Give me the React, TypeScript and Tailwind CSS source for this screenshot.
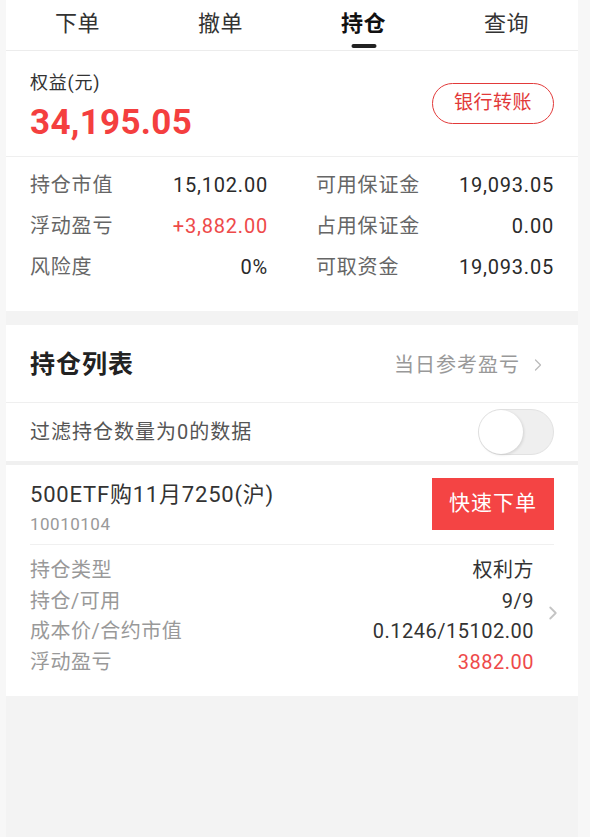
import { ChevronRight } from "lucide-react";

const tabs = ["下单", "撤单", "持仓", "查询"];

const stats = [
    { l1: "持仓市值", v1: "15,102.00", l2: "可用保证金", v2: "19,093.05", red: false },
    { l1: "浮动盈亏", v1: "+3,882.00", l2: "占用保证金", v2: "0.00", red: true },
    { l1: "风险度", v1: "0%", l2: "可取资金", v2: "19,093.05", red: false },
];

const details = [
    { label: "持仓类型", value: "权利方" },
    { label: "持仓/可用", value: "9/9" },
    { label: "成本价/合约市值", value: "0.1246/15102.00" },
    { label: "浮动盈亏", value: "3882.00", red: true },
];

export default function App() {
    return (
        <div className="min-h-[837px] bg-[#f7f7f7] font-['Roboto','Noto_Sans_CJK_SC',sans-serif]">
            <div className="ml-[6px] w-[572px] min-h-[837px] bg-[#f3f3f3]">
                {/* tabs */}
                <div className="grid grid-cols-4 h-[51px] bg-white border-b border-[#ececec]">
                    {tabs.map((t) => (
                        <div key={t} className="relative flex items-start justify-center pt-[8px]">
                            <span className={`text-[22px] leading-[32px] tracking-[0.5px] ${t === "持仓" ? "font-bold text-[#111]" : "text-[#333]"}`}>{t}</span>
                            {t === "持仓" && <div className="absolute bottom-[2px] left-1/2 -translate-x-1/2 w-[25px] h-[4px] rounded-[2px] bg-[#222]" />}
                        </div>
                    ))}
                </div>

                {/* equity */}
                <div className="bg-white">
                    <div className="flex items-center justify-between h-[106px] px-[24px] border-b border-[#efefef]">
                        <div className="flex flex-col mt-[6px]">
                            <span className="text-[18px] leading-[24px] tracking-[0.8px] text-[#333]">权益(元)</span>
                            <span className="text-[35px] leading-[40px] tracking-[0.3px] font-bold text-[#f43f3f] mt-[8px]">34,195.05</span>
                        </div>
                        <button className="w-[122px] h-[41px] rounded-full border-[1.5px] border-[#e23a3a] text-[#e23a3a] text-[19px] tracking-[0.5px]">
                            银行转账
                        </button>
                    </div>
                    <div className="px-[24px] pt-[7px] pb-[24px]">
                        {stats.map((s) => (
                            <div key={s.l1} className="grid grid-cols-2 gap-[48px] h-[41px] items-center text-[20px] tracking-[0.8px]">
                                <div className="flex justify-between">
                                    <span className="text-[#666]">{s.l1}</span>
                                    <span className={s.red ? "text-[#ee4a4a]" : "text-[#2a2a2a]"}>{s.v1}</span>
                                </div>
                                <div className="flex justify-between">
                                    <span className="text-[#666]">{s.l2}</span>
                                    <span className="text-[#2a2a2a]">{s.v2}</span>
                                </div>
                            </div>
                        ))}
                    </div>
                </div>

                {/* position list */}
                <div className="mt-[14px] bg-white">
                    <div className="flex items-center justify-between h-[78px] pl-[24px] pr-[30px] border-b border-[#efefef]">
                        <span className="text-[25px] tracking-[1px] font-bold text-[#222] mt-[3px]">持仓列表</span>
                        <div className="flex items-center gap-[8px] text-[#999] mt-[3px]">
                            <span className="text-[20px] tracking-[1px]">当日参考盈亏</span>
                            <ChevronRight size={20} strokeWidth={1.5} className="text-[#bbb]" />
                        </div>
                    </div>
                    <div className="flex items-center justify-between h-[58px] px-[24px]">
                        <span className="text-[20px] tracking-[1px] text-[#555]">过滤持仓数量为0的数据</span>
                        <div className="relative w-[76px] h-[46px] rounded-full border border-[#e2e2e2] bg-[#efefef]">
                            <div className="absolute left-0 top-0 w-[44px] h-[44px] rounded-full bg-white shadow-[1px_1px_3px_rgba(0,0,0,0.12)]" />
                        </div>
                    </div>
                </div>
                <div className="h-[4px] bg-[#f0f0f0]" />
                <div className="bg-white pb-[19px]">
                    <div className="flex items-start justify-between px-[24px] pt-[13px]">
                        <div className="flex flex-col pt-[2px]">
                            <span className="text-[22px] leading-[30px] tracking-[0.8px] text-[#333]">500ETF购11月7250(沪)</span>
                            <span className="text-[17px] leading-[22px] tracking-[0.5px] text-[#999] mt-[3px]">10010104</span>
                        </div>
                        <button className="w-[122px] h-[52px] bg-[#f44444] text-white text-[21px] tracking-[1px]">快速下单</button>
                    </div>
                    <div className="mx-[24px] mt-[9px] border-t border-[#f0f0f0]" />
                    <div className="flex items-center pl-[24px] pr-[14px] pt-[10px]">
                        <div className="flex-1">
                            {details.map((d) => (
                                <div key={d.label} className="flex justify-between h-[30.5px] items-center text-[20px] tracking-[0.5px]">
                                    <span className="text-[#999]">{d.label}</span>
                                    <span className={d.red ? "text-[#ee4a4a]" : "text-[#333]"}>{d.value}</span>
                                </div>
                            ))}
                        </div>
                        <ChevronRight size={22} strokeWidth={2} className="text-[#c4c4c4] ml-[8px] mt-[-6px]" />
                    </div>
                </div>
            </div>
        </div>
    );
}
